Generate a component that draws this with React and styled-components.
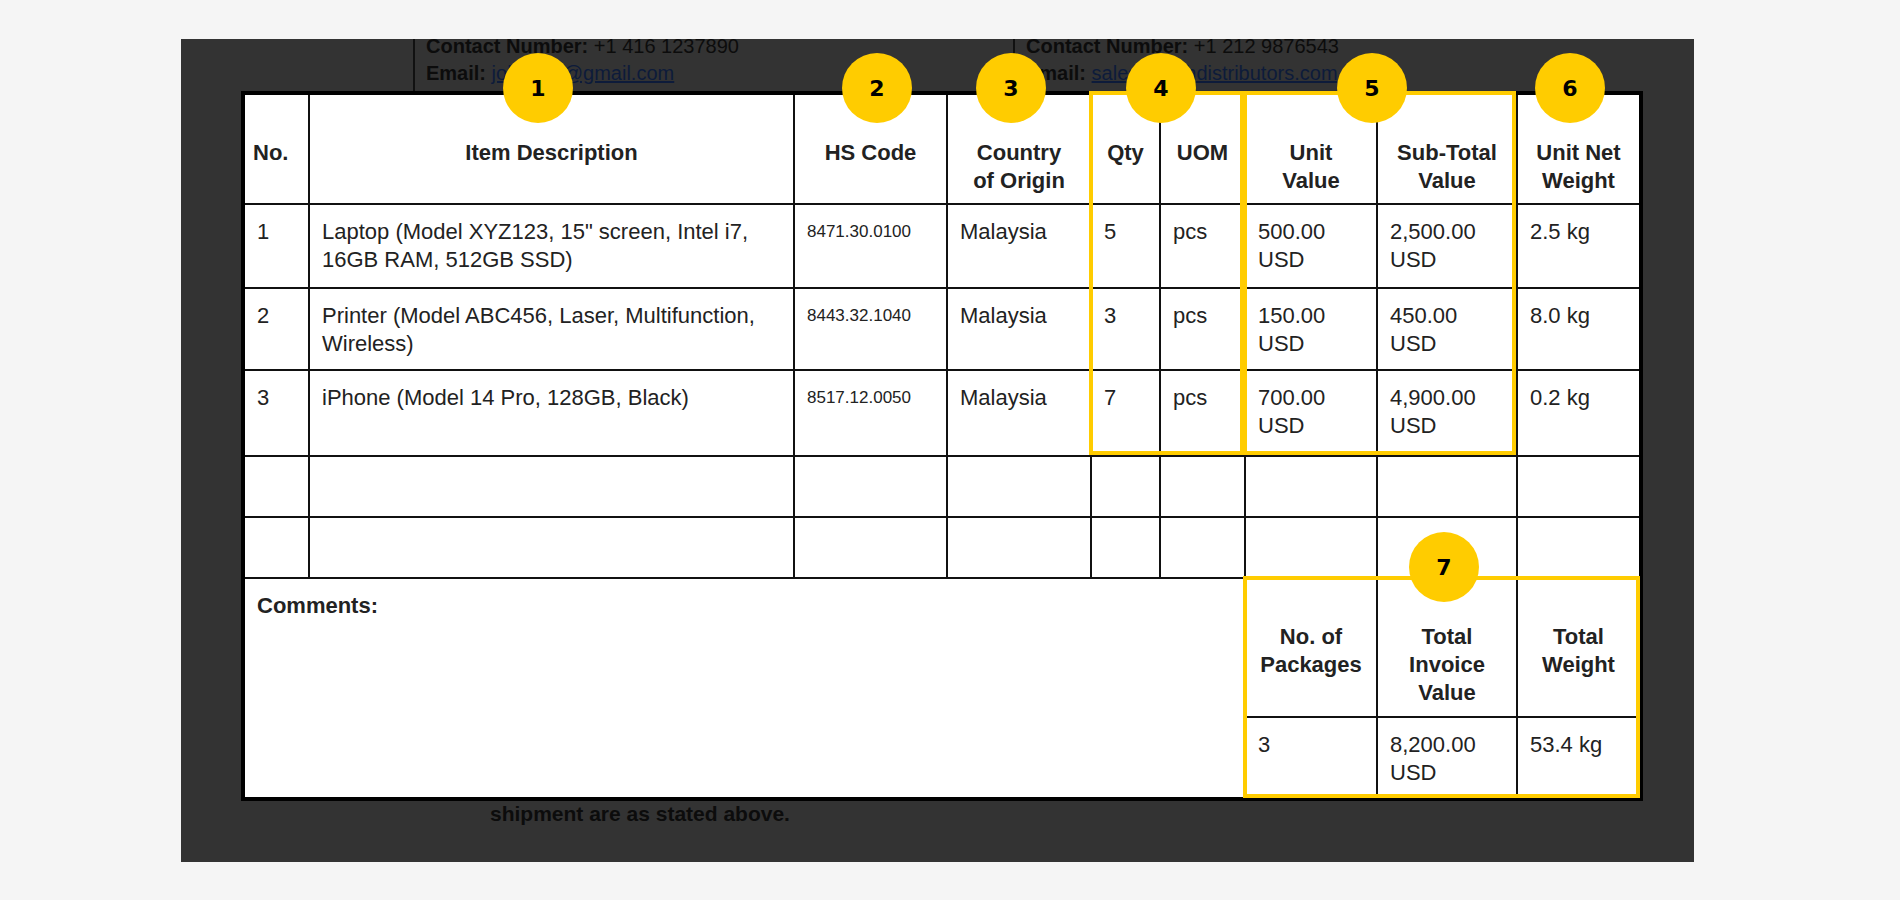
import React from "react";
import styled, { createGlobalStyle } from "styled-components";

const GlobalStyle = createGlobalStyle`
  html, body { margin: 0; padding: 0; background: #f5f5f5; }
  body { font-family: "Liberation Sans", Arial, sans-serif; }
`;

const cols = [66, 485, 153, 144, 69, 85, 132, 140, 124];

const items = [
  ["1", "Laptop (Model XYZ123, 15\" screen, Intel i7, 16GB RAM, 512GB SSD)", "8471.30.0100", "Malaysia", "5", "pcs", "500.00 USD", "2,500.00 USD", "2.5 kg", 84],
  ["2", "Printer (Model ABC456, Laser, Multifunction, Wireless)", "8443.32.1040", "Malaysia", "3", "pcs", "150.00 USD", "450.00 USD", "8.0 kg", 82],
  ["3", "iPhone (Model 14 Pro, 128GB, Black)", "8517.12.0050", "Malaysia", "7", "pcs", "700.00 USD", "4,900.00 USD", "0.2 kg", 86],
];

const circles = [
  { n: 1, x: 297, y: -3 },
  { n: 2, x: 636, y: -3 },
  { n: 3, x: 770, y: -3 },
  { n: 4, x: 920, y: -3 },
  { n: 5, x: 1131, y: -3 },
  { n: 6, x: 1329, y: -3 },
  { n: 7, x: 1203, y: 476 },
];

const boxes = [
  { x: 848, y: 0, w: 155, h: 364 },
  { x: 1002, y: 0, w: 273, h: 364 },
  { x: 1002, y: 485, w: 397, h: 222 },
];

export default function App() {
  return (
    <>
      <GlobalStyle />
      <Page>
        <Panel>
          <DocTop>
            <Party $left={232}>
              <Line><b>Contact Number:</b> +1 416 1237890</Line>
              <Line><b>Email:</b> <Link>johndoe@gmail.com</Link></Line>
            </Party>
            <Party $left={0}>
              <Line><b>Contact Number:</b> +1 212 9876543</Line>
              <Line><b>Email:</b> <Link>sales@techdistributors.com</Link></Line>
            </Party>
          </DocTop>
          <TableWrap>
            <Table>
              <colgroup>
                {cols.map((w, i) => <col key={i} style={{ width: w }} />)}
              </colgroup>
              <thead>
                <tr style={{ height: 111 }}>
                  <Th>No.</Th>
                  <Th $center>Item Description</Th>
                  <Th $center>HS Code</Th>
                  <Th $center>Country<br />of Origin</Th>
                  <Th $center>Qty</Th>
                  <Th $center>UOM</Th>
                  <Th $center>Unit<br />Value</Th>
                  <Th $center>Sub-Total<br />Value</Th>
                  <Th $center>Unit Net<br />Weight</Th>
                </tr>
              </thead>
              <tbody>
                {items.map((r) => (
                  <tr key={r[0]} style={{ height: r[9] }}>
                    {r.slice(0, 9).map((c, i) => (
                      <Td key={i} $small={i === 2}>{c}</Td>
                    ))}
                  </tr>
                ))}
                {[0, 1].map((k) => (
                  <tr key={"e" + k} style={{ height: 61 }}>
                    {cols.map((_, i) => <Td key={i} />)}
                  </tr>
                ))}
                <tr style={{ height: 139 }}>
                  <Td colSpan={6} rowSpan={2}><b>Comments:</b></Td>
                  <Th $center>No. of<br />Packages</Th>
                  <Th $center>Total<br />Invoice<br />Value</Th>
                  <Th $center>Total<br />Weight</Th>
                </tr>
                <tr style={{ height: 82 }}>
                  <Td>3</Td>
                  <Td>8,200.00 USD</Td>
                  <Td>53.4 kg</Td>
                </tr>
              </tbody>
            </Table>
            {boxes.map((b, i) => (
              <Highlight key={i} style={{ left: b.x, top: b.y, width: b.w, height: b.h }} />
            ))}
            {circles.map((c) => (
              <Badge key={c.n} style={{ left: c.x - 35, top: c.y - 35 }}>{c.n}</Badge>
            ))}
          </TableWrap>
          <Footer>shipment are as stated above.</Footer>
        </Panel>
      </Page>
    </>
  );
}

const Page = styled.div`
  width: 1900px;
  height: 900px;
  padding-top: 39px;
  box-sizing: border-box;
`;

const Panel = styled.div`
  margin-left: 181px;
  width: 1513px;
  height: 823px;
  background: #333;
  overflow: hidden;
`;

const DocTop = styled.div`
  display: flex;
  height: 52px;
`;

const Party = styled.div`
  margin-left: ${(p) => p.$left}px;
  border-left: 2px solid #111;
  padding-left: 11px;
  margin-top: -6px;
  width: 600px;
  box-sizing: border-box;
  height: 58px;
`;

const Line = styled.div`
  font-size: 20px;
  line-height: 27px;
  color: #0c0c0c;
  white-space: nowrap;
`;

const Link = styled.span`
  color: #0d1b3a;
  text-decoration: underline;
`;

const TableWrap = styled.div`
  position: relative;
  margin-left: 60px;
  width: 1398px;
`;

const Table = styled.table`
  width: 1398px;
  table-layout: fixed;
  border-collapse: collapse;
  background: #fff;
  border: 4px solid #000;
  color: #222;
  font-family: "Liberation Sans", Arial, sans-serif;
`;

const Th = styled.th`
  border: 2px solid #111;
  font-size: 22px;
  font-weight: bold;
  line-height: 28px;
  text-align: ${(p) => (p.$center ? "center" : "left")};
  vertical-align: top;
  padding: 44px 8px 0;
`;

const Td = styled.td`
  border: 2px solid #111;
  font-size: ${(p) => (p.$small ? "17px" : "22px")};
  line-height: 28px;
  vertical-align: top;
  padding: 13px 16px 0 12px;
`;

const Highlight = styled.div`
  position: absolute;
  border: 4px solid #ffcc00;
  box-sizing: border-box;
  pointer-events: none;
`;

const Badge = styled.div`
  position: absolute;
  width: 70px;
  height: 70px;
  border-radius: 50%;
  background: #ffcc00;
  display: flex;
  align-items: center;
  justify-content: center;
  font-size: 22px;
  font-weight: 900;
  color: #000;
  font-family: "DejaVu Sans", sans-serif;
`;

const Footer = styled.div`
  margin-left: 309px;
  font-size: 21px;
  line-height: 26px;
  font-weight: bold;
  color: #0c0c0c;
`;
